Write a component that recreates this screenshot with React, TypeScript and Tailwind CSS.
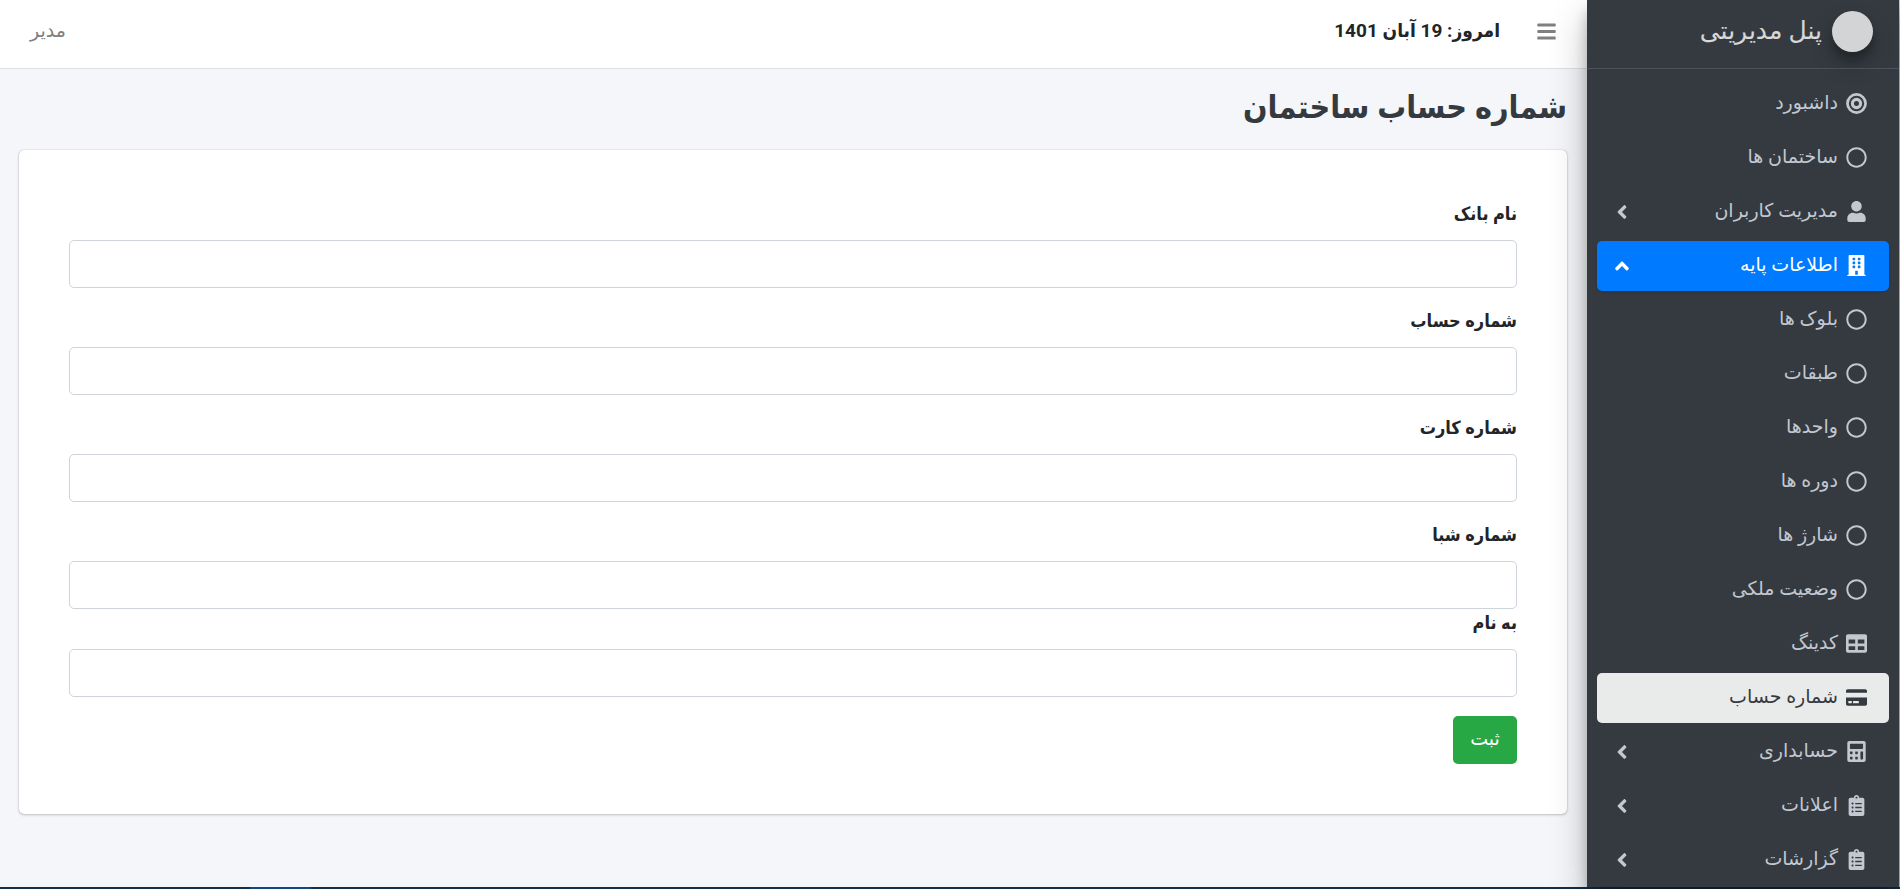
import { useState } from "react";
import type { ReactNode } from "react";
import clsx from "clsx";
import type { IconType } from "react-icons";
import {
  FaAngleLeft,
  FaAngleUp,
  FaBars,
  FaBuilding,
  FaCalculator,
  FaClipboardList,
  FaCreditCard,
  FaRegCircle,
  FaTable,
  FaUser,
} from "react-icons/fa";

type NavEntry = {
  label: string;
  icon: IconType;
  tree?: "open" | "closed";
  current?: boolean;
};

function BullseyeIcon({ className }: { className?: string }) {
  return (
    <svg viewBox="0 0 20 20" fill="none" stroke="currentColor" className={className}>
      <circle cx="10" cy="10" r="8.6" strokeWidth="2.6" />
      <circle cx="10" cy="10" r="3.9" strokeWidth="3" />
    </svg>
  );
}

const NAV: NavEntry[] = [
  { label: "داشبورد", icon: BullseyeIcon as IconType },
  { label: "ساختمان ها", icon: FaRegCircle },
  { label: "مدیریت کاربران", icon: FaUser, tree: "closed" },
  { label: "اطلاعات پایه", icon: FaBuilding, tree: "open" },
  { label: "بلوک ها", icon: FaRegCircle },
  { label: "طبقات", icon: FaRegCircle },
  { label: "واحدها", icon: FaRegCircle },
  { label: "دوره ها", icon: FaRegCircle },
  { label: "شارژ ها", icon: FaRegCircle },
  { label: "وضعیت ملکی", icon: FaRegCircle },
  { label: "کدینگ", icon: FaTable },
  { label: "شماره حساب", icon: FaCreditCard, current: true },
  { label: "حسابداری", icon: FaCalculator, tree: "closed" },
  { label: "اعلانات", icon: FaClipboardList, tree: "closed" },
  { label: "گزارشات", icon: FaClipboardList, tree: "closed" },
];

const FIELDS = [
  { id: "bank", label: "نام بانک" },
  { id: "account", label: "شماره حساب" },
  { id: "card", label: "شماره کارت" },
  { id: "sheba", label: "شماره شبا", tight: true },
  { id: "owner", label: "به نام" },
];

function NavItem({ label, icon: Icon, tree, current }: NavEntry) {
  return (
    <li>
      <a
        href="#"
        aria-current={current ? "page" : undefined}
        className={clsx(
          "flex h-[50px] items-center rounded-[5px] ps-[21px] pe-[14px] text-[19px]",
          tree === "open" && "bg-[#007bff] text-white shadow-sm",
          current && "bg-[#e9ebea] text-[#343a40]",
          !current && tree !== "open" && "text-[#c2c7d0]",
        )}
      >
        <span className="flex grow items-center gap-[6px] pb-[2px]">
          <span className="flex w-6 justify-center">
            <Icon className="h-[21px] w-auto" />
          </span>
          {label}
        </span>
        {tree === "closed" && <FaAngleLeft className="size-[22px]" />}
        {tree === "open" && <FaAngleUp className="size-[22px]" />}
      </a>
    </li>
  );
}

function Sidebar() {
  return (
    <aside className="relative z-10 w-[312px] shrink-0 bg-[#343a40] shadow-[0_18px_35px_rgba(0,0,0,.25),0_12px_12px_rgba(0,0,0,.22)]">
      <a
        href="#"
        className="flex h-[69px] items-center gap-[10px] border-b border-[#4b545c] px-[26px] pb-[6px] text-[25px] text-white/80"
      >
        <span className="size-[41px] rounded-full bg-[#d3d4d5] shadow-[0_12px_25px_rgba(0,0,0,.19),0_8px_8px_rgba(0,0,0,.23)]" />
        پنل مدیریتی
      </a>
      <nav className="px-[10px] pt-[10px]">
        <ul className="space-y-1">
          {NAV.map((entry) => (
            <NavItem key={entry.label} {...entry} />
          ))}
        </ul>
      </nav>
    </aside>
  );
}

function Card({ children }: { children: ReactNode }) {
  return (
    <section className="rounded-[5px] bg-white p-[50px] shadow-[0_0_1px_rgba(0,0,0,.35),0_1px_3px_rgba(0,0,0,.2)]">
      {children}
    </section>
  );
}

export default function App() {
  const [values, setValues] = useState<Record<string, string>>({});

  return (
    <div
      dir="rtl"
      className="flex h-screen flex-col overflow-hidden bg-[#f4f6f9] font-[Roboto,'DejaVu_Sans',sans-serif] text-[19px] text-[#212529]"
    >
      <div className="flex min-h-0 grow border-r border-[#c9cacb]">
        <Sidebar />
        <div className="min-w-0 grow">
          <header className="flex h-[69px] items-center border-b border-[#dee2e6] bg-white px-[30px] pb-[6px]">
            <button type="button" aria-label="منو" className="text-[#808080]">
              <FaBars className="size-[21px]" />
            </button>
            <span className="ms-9 font-[Roboto,'DejaVu_Sans_Condensed',sans-serif] font-bold">
              امروز: 19 آبان 1401
            </span>
            <a href="#" className="ms-auto text-[#808080]">
              مدیر
            </a>
          </header>

          <main className="ps-5 pe-[19px]">
            <h1 className="pt-4 pb-5 font-[Roboto,'DejaVu_Sans_Condensed',sans-serif] text-[32px] leading-[45px] font-bold text-[#343a40]">
              شماره حساب ساختمان
            </h1>
            <Card>
              <form onSubmit={(e) => e.preventDefault()}>
                {FIELDS.map((f) => (
                  <div key={f.id} className={f.tight ? "" : "mb-[19px]"}>
                    <label
                      htmlFor={f.id}
                      className="mb-3 block font-[Roboto,'DejaVu_Sans_Condensed',sans-serif] text-[18px] leading-[28px] font-bold"
                    >
                      {f.label}
                    </label>
                    <input
                      id={f.id}
                      type="text"
                      value={values[f.id] ?? ""}
                      onChange={(e) => setValues({ ...values, [f.id]: e.target.value })}
                      className="block h-12 w-full rounded-[5px] border border-[#ced4da] bg-white px-4"
                    />
                  </div>
                ))}
                <button
                  type="submit"
                  className="h-12 w-16 rounded-[5px] bg-[#28a745] pb-[2px] text-white"
                >
                  ثبت
                </button>
              </form>
            </Card>
          </main>
        </div>
      </div>
      <div className="flex h-[2px] shrink-0 justify-end bg-[#12304a]">
        <span className="w-[61px] bg-[#0a4a80]" />
        <span className="w-[250px]" />
      </div>
    </div>
  );
}
